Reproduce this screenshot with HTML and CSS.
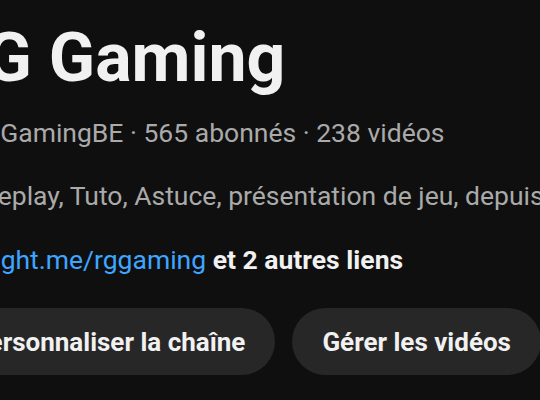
FILE: index.html
```
<!DOCTYPE html>
<html lang="fr">

<head>
    <meta charset="UTF-8">
    <meta name="viewport" content="width=device-width, initial-scale=1.0">
    <title>RG Gaming</title>

    <link rel="stylesheet" href="styles.css">
</head>

<body>
    <div class="channel">
        <h1 class="channel-name">RG Gaming</h1>

        <div class="channel-meta">@RGGamingBE · 565 abonnés · 238 vidéos</div>

        <div class="channel-desc">Gameplay, Tuto, Astuce, présentation de jeu, depuis 2015 sur la chaîne</div>

        <div class="channel-links">
            <a class="link" href="#">starlight.me/rggaming</a>
            <span class="more">et 2 autres liens</span>
        </div>

        <div class="actions">
            <button class="btn">Personnaliser la chaîne</button>
            <button class="btn">Gérer les vidéos</button>
        </div>
    </div>
</body>

</html>
```

FILE: styles.css
```
html,
body {
    margin: 0;
    background-color: #0f0f0f;
    overflow: hidden;
}

body {
    width: 540px;
    height: 400px;
}

.channel {
    margin-left: -58px;
    padding-top: 20px;
    font-family: Roboto, "Noto Sans", Arial, sans-serif;
    white-space: nowrap;
}

.channel-name {
    margin: 0;
    font-size: 68px;
    line-height: 76px;
    font-weight: 700;
    color: #f1f1f1;
}

.channel-meta {
    margin-top: 19px;
    font-size: 26.5px;
    line-height: 36px;
    color: #aaaaaa;
}

.channel-desc {
    margin-top: 27px;
    font-size: 26.5px;
    line-height: 36px;
    color: #aaaaaa;
}

.channel-links {
    margin-top: 28px;
    font-size: 26.5px;
    line-height: 36px;
}

.link {
    color: #3ea6ff;
    text-decoration: none;
}

.more {
    color: #f1f1f1;
    font-weight: 700;
}

.actions {
    display: flex;
    gap: 17px;
    margin-top: 30px;
}

.btn {
    height: 67px;
    padding: 0 30px;
    border: none;
    border-radius: 34px;
    background-color: #272727;
    color: #f1f1f1;
    font-family: Roboto, "Noto Sans", Arial, sans-serif;
    font-size: 26px;
    font-weight: 700;
}
```
